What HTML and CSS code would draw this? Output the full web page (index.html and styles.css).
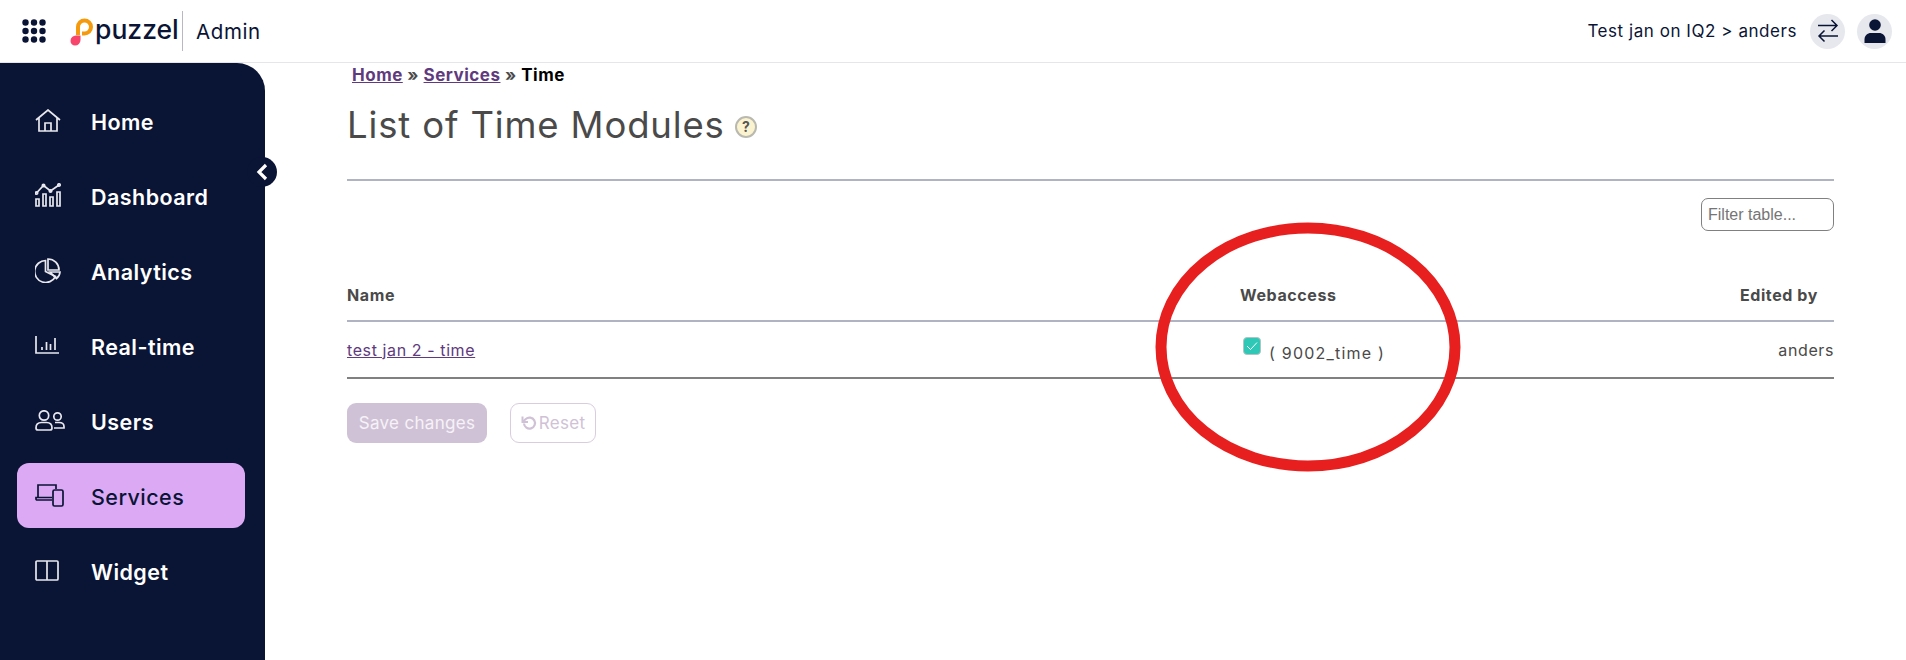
FILE: index.html
```html
<!DOCTYPE html>
<html lang="en">
<head>
  <meta charset="UTF-8">
  <meta name="viewport" content="width=device-width, initial-scale=1.0">
  <title>Puzzel Admin</title>
  <link rel="stylesheet" href="styles.css">
</head>
<body>
  <header class="topbar">
    <svg class="apps" width="24" height="24" viewBox="0 0 24 24" fill="#0a1435">
      <circle cx="3.5" cy="3.5" r="3.2"/><circle cx="12" cy="3.5" r="3.2"/><circle cx="20.5" cy="3.5" r="3.2"/>
      <circle cx="3.5" cy="12" r="3.2"/><circle cx="12" cy="12" r="3.2"/><circle cx="20.5" cy="12" r="3.2"/>
      <circle cx="3.5" cy="20.5" r="3.2"/><circle cx="12" cy="20.5" r="3.2"/><circle cx="20.5" cy="20.5" r="3.2"/>
    </svg>
    <svg class="logo-mark" width="24" height="28" viewBox="0 0 24 28">
      <path d="M8 17V9a6.5 6.5 0 1 1 6.5 6.5H12" fill="none" stroke="#f59a0c" stroke-width="4"/>
      <path d="M0.5 23a5.5 5.5 0 0 1 5.500-5.500h4.500v4.500a5.500 5.500 0 0 1-5.500 5.500a4.500 4.500 0 0 1-4.500-4.500z" fill="#f7456b"/>
    </svg>
    <span class="logo-text">puzzel</span>
    <span class="divider"></span>
    <span class="app-name">Admin</span>
    <div class="account">
      <span class="account-name">Test jan on IQ2 &gt; anders</span>
      <span class="round-btn">
        <svg width="22" height="24" viewBox="0 0 22 24" fill="none" stroke="#0a1435" stroke-width="1.5">
          <path d="M1 7.500h19M14.500 2l5.500 5.500l-5.500 5.500" transform="translate(0 -1)"/>
          <path d="M21 17.500h-19M7.500 12l-5.500 5.500l5.500 5.500" transform="translate(0 -0.500)"/>
        </svg>
      </span>
      <span class="round-btn">
        <svg width="22" height="24" viewBox="0 0 22 24" fill="#0a1435">
          <circle cx="11" cy="6" r="5.800"/>
          <path d="M0.500 24v-3.500c0-4 3-6.500 6.500-6.500h8c3.500 0 6.500 2.500 6.500 6.500v3.500z"/>
        </svg>
      </span>
    </div>
  </header>

  <div class="layout">
    <nav class="sidebar">
      <a class="nav-item">
        <span class="nav-icon">
          <svg width="26" height="23" viewBox="0 0 26 23">
            <path d="M1 11L13 1l12 10M4 9v13h18V9M10 22v-8h6v8"/>
          </svg>
        </span>
        Home
      </a>
      <a class="nav-item">
        <span class="nav-icon">
          <svg width="26" height="24" viewBox="0 0 26 24">
            <path d="M1.500 10L8.500 2.500l7 5.500L24 2"/>
            <circle cx="1.500" cy="10" r="1.200"/><circle cx="8.500" cy="2.500" r="1.200"/><circle cx="15.500" cy="8" r="1.200"/><circle cx="24" cy="2" r="1.200"/>
            <path d="M1 16h3v7h-3zM8 11h3v12h-3zM15 14h3v9h-3zM22 9h3v14h-3z"/>
          </svg>
        </span>
        Dashboard
      </a>
      <a class="nav-item">
        <span class="nav-icon">
          <svg width="26" height="25" viewBox="0 0 26 25">
            <path d="M10.500 2.500a11 11 0 1 0 10 16l-10-5z"/>
            <path d="M13 1a11 11 0 0 1 11 11h-11z"/>
            <path d="M15 14h10a9 9 0 0 1-3.500 6.500z"/>
          </svg>
        </span>
        Analytics
      </a>
      <a class="nav-item">
        <span class="nav-icon">
          <svg width="25" height="18" viewBox="0 0 25 18">
            <path d="M1 0v17h23M7 11v3M11.500 6v8M15.500 8v6M20 2v12"/>
          </svg>
        </span>
        Real-time
      </a>
      <a class="nav-item">
        <span class="nav-icon">
          <svg width="30" height="21" viewBox="0 0 30 21">
            <circle cx="9" cy="5.500" r="4.700"/>
            <path d="M1 18c0-4 2-5.500 5.500-5.500h5c3.500 0 5.500 1.500 5.500 5.500c0 1.500-1 2-2 2H3c-1 0-2-.5-2-2z"/>
            <circle cx="22.500" cy="6.500" r="3.700"/>
            <path d="M20 12.500h4c3 0 5 1.500 5 4v1.500h-10"/>
          </svg>
        </span>
        Users
      </a>
      <a class="nav-item active">
        <span class="nav-icon">
          <svg width="29" height="23" viewBox="0 0 29 23">
            <path d="M3 13V1h18v4"/>
            <path d="M17 16H2a1 1 0 0 1-1-1v-1.500h16"/>
            <rect x="18" y="6" width="10" height="16" rx="1.500"/>
          </svg>
        </span>
        Services
      </a>
      <a class="nav-item">
        <span class="nav-icon">
          <svg width="24" height="21" viewBox="0 0 24 21">
            <rect x="1" y="1" width="22" height="19" rx="1"/>
            <path d="M12 1v19"/>
          </svg>
        </span>
        Widget
      </a>
      <span class="collapse-btn">
        <svg width="12" height="18" viewBox="0 0 12 18" fill="none" stroke="#fff" stroke-width="3.200">
          <path d="M10 2L3 9l7 7"/>
        </svg>
      </span>
    </nav>

    <main class="content">
      <div class="breadcrumb"><a>Home</a> » <a>Services</a> » <span class="current">Time</span></div>
      <h1 class="page-title">List of Time Modules <span class="help">?</span></h1>
      <hr class="title-rule">
      <div class="filter-row">
        <input class="filter" type="text" placeholder="Filter table...">
      </div>
      <table class="modules">
        <thead>
          <tr>
            <th class="col-name">Name</th>
            <th class="col-access">Webaccess</th>
            <th class="col-edited">Edited by</th>
          </tr>
        </thead>
        <tbody>
          <tr>
            <td class="col-name"><a>test jan 2 - time</a></td>
            <td class="col-access">
              <span class="check">
                <svg width="12" height="10" viewBox="0 0 12 10" fill="none" stroke="#fff" stroke-width="1">
                  <path d="M1 5l3.500 3.500L11 1.500"/>
                </svg>
              </span>
              <span class="access-name">( 9002_time )</span>
            </td>
            <td class="col-edited">anders</td>
          </tr>
        </tbody>
      </table>
      <div class="actions">
        <button class="btn-save" disabled>Save changes</button>
        <button class="btn-reset" disabled>
          <svg width="16" height="16" viewBox="0 0 16 16" fill="none" stroke="#d0c2d6" stroke-width="2.200">
            <path d="M3 8.500a5.500 5.500 0 1 0 1.800-4.500L2 6.500"/>
            <path d="M1.500 1.500v5.500h5.500" stroke-width="2"/>
          </svg>
          Reset
        </button>
      </div>
    </main>
  </div>

  <!-- red marker drawn on top of the screenshot -->
  <svg class="marker" width="306" height="252" viewBox="0 0 306 252">
    <ellipse cx="153" cy="126" rx="147" ry="119" fill="none" stroke="#e81f1f" stroke-width="11"/>
  </svg>
</body>
</html>
```

FILE: styles.css
```css
html, body {
  margin: 0;
  padding: 0;
  height: 660px;
  overflow: hidden;
}
body {
  font-family: "Inter", "Open Sans", sans-serif;
  background: #fff;
  color: #4a4a4a;
  position: relative;
}
.topbar {
  height: 62px;
  border-bottom: 1px solid #e6e6ea;
  display: flex;
  align-items: center;
  padding-left: 22px;
  padding-right: 14px;
  color: #0a1435;
}
.apps {
  margin-right: 24px;
}
.logo-mark {
  margin-right: 1px;
  margin-top: 2px;
}
.logo-text {
  font-size: 26.500px;
  font-weight: 500;
  width: 87px;
  margin-top: -4px;
}
.divider {
  width: 1px;
  height: 40px;
  background: #b8b8c0;
}
.app-name {
  font-size: 20.500px;
  margin-left: 13px;
  letter-spacing: 0.6px;
}
.account {
  margin-left: auto;
  display: flex;
  align-items: center;
  gap: 12px;
}
.account-name {
  font-size: 17px;
  letter-spacing: 0.55px;
  margin-right: 1px;
}
.round-btn {
  width: 35px;
  height: 35px;
  border-radius: 50%;
  background: #e7e8ed;
  display: flex;
  align-items: center;
  justify-content: center;
}
.layout {
  display: flex;
  height: 597px;
}
.sidebar {
  width: 265px;
  background: #0a1435;
  border-top-right-radius: 28px;
  padding: 25px 20px 0 17px;
  box-sizing: border-box;
  flex-shrink: 0;
  position: relative;
}
.nav-item {
  display: flex;
  align-items: center;
  height: 65px;
  box-sizing: border-box;
  margin-bottom: 10px;
  border-radius: 12px;
  padding: 2px 0 0 18px;
  color: #fff;
  font-size: 21.500px;
  font-weight: 600;
  letter-spacing: 0.45px;
}
.nav-item.active {
  background: #dcaaf5;
  color: #0a1435;
  font-weight: 500;
}
.nav-icon {
  width: 56px;
  flex-shrink: 0;
  display: flex;
  margin-top: -3px;
}
.nav-icon svg {
  fill: none;
  stroke: #e8e8ee;
  stroke-width: 1.700;
}
.active .nav-icon svg {
  stroke: #0a1435;
}
.collapse-btn {
  position: absolute;
  left: 247px;
  top: 94px;
  width: 30px;
  height: 30px;
  border-radius: 50%;
  background: #0a1435;
  display: flex;
  align-items: center;
  justify-content: center;
}
.content {
  flex: 1;
  padding: 0 72px 0 82px;
}
.breadcrumb {
  font-size: 17px;
  font-weight: 700;
  letter-spacing: 0.5px;
  color: #4a4a4a;
  margin-left: 5px;
  line-height: 24px;
}
.breadcrumb a {
  color: #5f3a7e;
  text-decoration: underline;
}
.breadcrumb .current {
  color: #000;
}
.page-title {
  font-size: 36.500px;
  font-weight: 400;
  letter-spacing: 0.85px;
  margin: 11px 0 0 0;
  line-height: 54px;
  color: #4a4a4a;
  display: flex;
  align-items: center;
  white-space: pre;
}
.help {
  width: 22px;
  height: 22px;
  border-radius: 50%;
  background: #fbf3cf;
  border: 2px solid #b9b9b0;
  box-sizing: border-box;
  font-size: 14px;
  font-weight: 700;
  letter-spacing: 0;
  line-height: 18px;
  text-align: center;
  color: #555;
  margin-left: -1px;
  margin-top: 3px;
}
.title-rule {
  border: none;
  height: 2px;
  background: #b0b3c1;
  margin: 27px 0 0 0;
}
.filter-row {
  display: flex;
  justify-content: flex-end;
  margin-top: 17px;
}
.filter {
  width: 133px;
  height: 33px;
  box-sizing: border-box;
  border: 1px solid #808080;
  border-radius: 7px;
  padding: 0 6px;
  font-family: "Liberation Sans", sans-serif;
  font-size: 16px;
}
.filter::placeholder {
  color: #757575;
}
.modules {
  width: 100%;
  border-collapse: collapse;
  margin-top: 35px;
  font-size: 16px;
  letter-spacing: 0.6px;
}
.modules th {
  height: 55px;
  font-weight: 700;
  text-align: left;
  padding: 4px 0 0 0;
  box-sizing: border-box;
  border-bottom: 2px solid #b0b3c1;
}
.modules td {
  height: 55px;
  padding: 0;
  border-bottom: 2px solid #808080;
}
.col-name {
  width: 893px;
}
.modules a {
  color: #5f3a7e;
  text-decoration: underline;
}
.modules .col-edited {
  text-align: right;
}
.modules th.col-edited {
  padding-right: 16px;
}
.check {
  display: inline-flex;
  align-items: center;
  justify-content: center;
  width: 18px;
  height: 18px;
  border-radius: 4px;
  background: #2fc7b5;
  border: 1px solid #b0c4c4;
  box-sizing: border-box;
  margin-left: 3px;
  margin-right: 3px;
  vertical-align: 7px;
}
.access-name {
  letter-spacing: 1.2px;
  position: relative;
  top: 1px;
}
.actions {
  display: flex;
  gap: 23px;
  margin-top: 24px;
}
.actions button {
  height: 40px;
  border-radius: 9px;
  font-family: inherit;
  font-size: 17px;
  letter-spacing: 0.3px;
  display: flex;
  align-items: center;
  justify-content: center;
  padding: 0;
}
.btn-save {
  width: 140px;
  background: #d0c2d6;
  border: none;
  color: #f6f2f7;
}
.btn-reset {
  width: 86px;
  background: #fff;
  border: 1px solid #d9cce0;
  color: #d0c2d6;
  gap: 2px;
}
.marker {
  position: absolute;
  left: 1155px;
  top: 221px;
}
```
